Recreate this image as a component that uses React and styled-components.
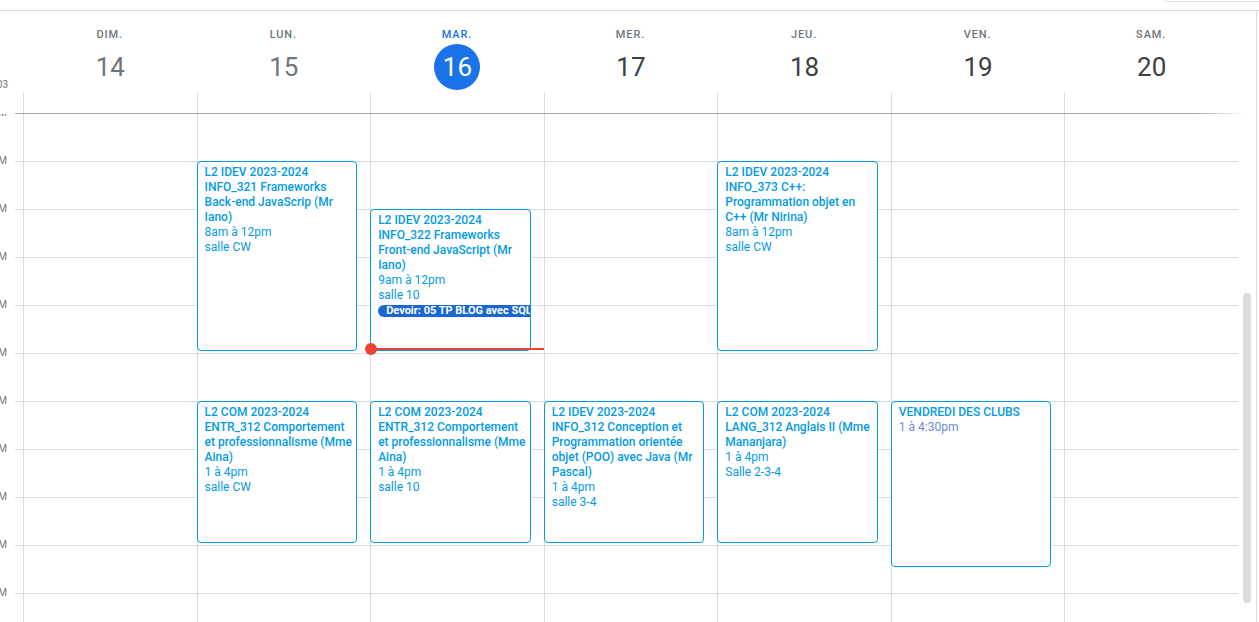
import React from 'react'
import styled, { createGlobalStyle } from 'styled-components'

const HOUR_HEIGHT = 48
const FIRST_HOUR = 7
const HOURS = [7, 8, 9, 10, 11, 12, 13, 14, 15, 16, 17, 18]

const GlobalStyle = createGlobalStyle`
  html, body {
    margin: 0;
    padding: 0;
    background: #ffffff;
  }
  body {
    font-family: Roboto, 'Liberation Sans', Arial, sans-serif;
    overflow: hidden;
  }
  * {
    box-sizing: border-box;
  }
`

const days = [
  { name: 'dim.', date: 14, past: true },
  { name: 'lun.', date: 15, past: true },
  { name: 'mar.', date: 16, today: true },
  { name: 'mer.', date: 17 },
  { name: 'jeu.', date: 18 },
  { name: 'ven.', date: 19 },
  { name: 'sam.', date: 20 },
]

const events = [
  {
    day: 1, start: 8, end: 12,
    title: 'L2 IDEV 2023-2024 INFO_321 Frameworks Back-end JavaScrip (Mr Iano)',
    time: '8am à 12pm', place: 'salle CW',
  },
  {
    day: 2, start: 9, end: 12,
    title: 'L2 IDEV 2023-2024 INFO_322 Frameworks Front-end JavaScript (Mr Iano)',
    time: '9am à 12pm', place: 'salle 10', task: 'Devoir: 05 TP BLOG avec SQL',
  },
  {
    day: 4, start: 8, end: 12,
    title: 'L2 IDEV 2023-2024 INFO_373 C++: Programmation objet en C++ (Mr Nirina)',
    time: '8am à 12pm', place: 'salle CW',
  },
  {
    day: 1, start: 13, end: 16,
    title: 'L2 COM 2023-2024 ENTR_312 Comportement et professionnalisme (Mme Aina)',
    time: '1 à 4pm', place: 'salle CW',
  },
  {
    day: 2, start: 13, end: 16,
    title: 'L2 COM 2023-2024 ENTR_312 Comportement et professionnalisme (Mme Aina)',
    time: '1 à 4pm', place: 'salle 10',
  },
  {
    day: 3, start: 13, end: 16,
    title: 'L2 IDEV 2023-2024 INFO_312 Conception et Programmation orientée objet (POO) avec Java (Mr Pascal)',
    time: '1 à 4pm', place: 'salle 3-4',
  },
  {
    day: 4, start: 13, end: 16,
    title: 'L2 COM 2023-2024 LANG_312 Anglais II (Mme Mananjara)',
    time: '1 à 4pm', place: 'Salle 2-3-4',
  },
  {
    day: 5, start: 13, end: 16.5,
    title: 'VENDREDI DES CLUBS',
    time: '1 à 4:30pm', timeColor: '#7088dc',
  },
]

// current time marker: mardi, 11h55
const NOW = { day: 2, hour: 11.92 }

const hourLabel = (h) => {
  const suffix = h < 12 ? 'AM' : 'PM'
  const v = h > 12 ? h - 12 : h
  return `${v} ${suffix}`
}

const Page = styled.div`
  width: 1259px;
  height: 622px;
  display: flex;
  flex-direction: column;
  overflow: hidden;
`
const TopStrip = styled.div`
  height: 11px;
  flex: none;
  display: flex;
  border-bottom: 1px solid #dadce0;
`
const SearchStub = styled.div`
  margin-left: auto;
  width: 94px;
  height: 2px;
  border: 1px solid #dadce0;
  border-top: none;
  border-right: none;
  border-radius: 0 0 0 4px;
`
const Calendar = styled.div`
  width: 1257px;
  flex: 1;
  min-height: 0;
  display: flex;
  flex-direction: column;
  border-right: 1px solid #dadce0;
`
const Header = styled.div`
  flex: none;
  display: flex;
  position: relative;
  z-index: 2;
  background: #fff;
`
const HeaderGutter = styled.div`
  width: 23px;
  flex: none;
  display: flex;
  justify-content: flex-end;
  align-items: flex-end;
  padding: 0 15px 22px 0;
  font-size: 10px;
  line-height: 12px;
  color: #70757a;
  white-space: nowrap;
`
const DaysRow = styled.div`
  width: 1215px;
  flex: none;
  display: grid;
  grid-template-columns: repeat(7, 1fr);
`
const DayHead = styled.div`
  display: flex;
  flex-direction: column;
  align-items: center;
  padding-top: 16px;
`
const DayName = styled.div`
  font-size: 11px;
  line-height: 16px;
  font-weight: 500;
  letter-spacing: 0.9px;
  text-transform: uppercase;
  color: ${(p) => (p.$today ? '#1a73e8' : '#70757a')};
`
const DayNumber = styled.div`
  margin-top: 1px;
  width: 46px;
  height: 46px;
  border-radius: 50%;
  display: flex;
  align-items: center;
  justify-content: center;
  font-size: 26px;
  font-weight: 400;
  padding-left: 1px;
  background: ${(p) => (p.$today ? '#1a73e8' : 'transparent')};
  color: ${(p) => (p.$today ? '#ffffff' : p.$past ? '#70757a' : '#3c4043')};
`
const AllDaySlot = styled.div`
  align-self: stretch;
  height: 20px;
  margin-top: 3px;
  border-left: 1px solid #dadce0;
`
const HeaderRule = styled.div`
  flex: none;
  margin-left: 15px;
  width: 1230px;
  height: 1px;
  background: linear-gradient(to right, #a8a8a8 0, #a8a8a8 calc(100% - 50px), rgba(168, 168, 168, 0) 100%);
  position: relative;
  z-index: 2;
`
const Body = styled.div`
  flex: 1;
  min-height: 0;
  display: flex;
  overflow: hidden;
`
const Gutter = styled.div`
  width: 23px;
  flex: none;
`
const GutterCell = styled.div`
  position: relative;
  height: ${HOUR_HEIGHT}px;
  &::after {
    content: '';
    position: absolute;
    right: 0;
    bottom: 0;
    width: 8px;
    height: 1px;
    background: #dadce0;
  }
`
const HourLabel = styled.span`
  position: absolute;
  top: -7px;
  right: 16px;
  font-size: 10px;
  line-height: 12px;
  color: #70757a;
  white-space: nowrap;
`
const DayGrid = styled.div`
  width: 1215px;
  flex: none;
  display: grid;
  grid-template-columns: repeat(7, 1fr);
  align-content: start;
`
const DayColumn = styled.div`
  position: relative;
  border-left: 1px solid #dadce0;
`
const HourSlot = styled.div`
  height: ${HOUR_HEIGHT}px;
  border-bottom: 1px solid #dadce0;
`
const EventCard = styled.div`
  position: absolute;
  left: -1px;
  width: calc(100% - 12px);
  border: 1px solid #039be5;
  border-radius: 4px;
  background: #ffffff;
  padding: 3px 2px 0 7px;
  overflow: hidden;
  color: #039be5;
  font-size: 12px;
  line-height: 15px;
  z-index: 1;
`
const EventTitle = styled.div`
  font-weight: 500;
`
const EventMeta = styled.div`
  color: ${(p) => p.$color || '#039be5'};
`
const TaskChip = styled.div`
  display: inline-block;
  margin-top: 1px;
  height: 12px;
  line-height: 12px;
  padding: 0 8px;
  border-radius: 6px;
  background: #1967d2;
  color: #ffffff;
  font-size: 11px;
  font-weight: 700;
  white-space: nowrap;
`
const NowLine = styled.div`
  position: absolute;
  left: 0;
  right: 0;
  height: 2px;
  background: #ea4335;
  z-index: 3;
  &::before {
    content: '';
    position: absolute;
    left: -6px;
    top: -5px;
    width: 12px;
    height: 12px;
    border-radius: 50%;
    background: #ea4335;
  }
`
const ScrollTrack = styled.div`
  width: 18px;
  flex: none;
  padding-left: 5px;
`
const ScrollThumb = styled.div`
  margin-top: 179px;
  width: 8px;
  height: 310px;
  border-radius: 4px;
  background: #dadce0;
`

function Event({ event }) {
  const top = (event.start - FIRST_HOUR) * HOUR_HEIGHT - 1
  const height = (event.end - event.start) * HOUR_HEIGHT - 2
  return (
    <EventCard style={{ top, height }}>
      <EventTitle>{event.title}</EventTitle>
      <EventMeta $color={event.timeColor}>{event.time}</EventMeta>
      {event.place && <EventMeta>{event.place}</EventMeta>}
      {event.task && <TaskChip>{event.task}</TaskChip>}
    </EventCard>
  )
}

export default function App() {
  return (
    <Page>
      <GlobalStyle />
      <TopStrip>
        <SearchStub />
      </TopStrip>
      <Calendar>
        <Header>
          <HeaderGutter>GMT+03</HeaderGutter>
          <DaysRow>
            {days.map((d) => (
              <DayHead key={d.date}>
                <DayName $today={d.today}>{d.name}</DayName>
                <DayNumber $today={d.today} $past={d.past}>{d.date}</DayNumber>
                <AllDaySlot />
              </DayHead>
            ))}
          </DaysRow>
        </Header>
        <HeaderRule />
        <Body>
          <Gutter>
            {HOURS.map((h) => (
              <GutterCell key={h}>
                <HourLabel>{hourLabel(h)}</HourLabel>
              </GutterCell>
            ))}
          </Gutter>
          <DayGrid>
            {days.map((d, i) => (
              <DayColumn key={d.date}>
                {HOURS.map((h) => <HourSlot key={h} />)}
                {events.filter((e) => e.day === i).map((e, k) => <Event key={k} event={e} />)}
                {NOW.day === i && (
                  <NowLine style={{ top: (NOW.hour - FIRST_HOUR) * HOUR_HEIGHT - 2 }} />
                )}
              </DayColumn>
            ))}
          </DayGrid>
          <ScrollTrack>
            <ScrollThumb />
          </ScrollTrack>
        </Body>
      </Calendar>
    </Page>
  )
}
